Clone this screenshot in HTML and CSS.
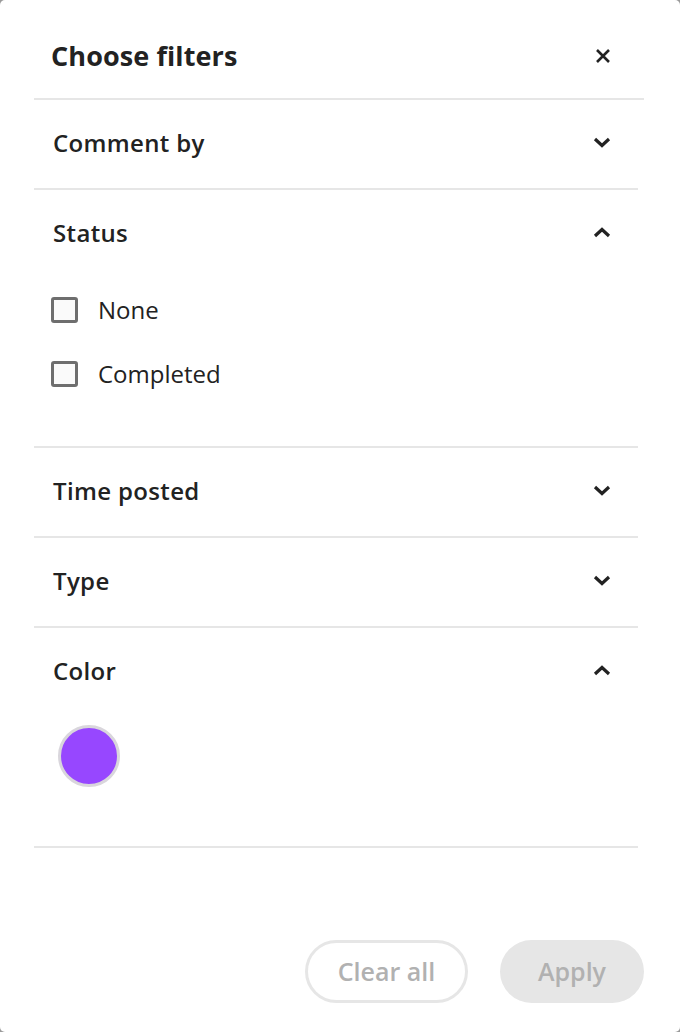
FILE: index.html
```html
<!DOCTYPE html>
<html>
<head>
<meta charset="utf-8">
<link rel="stylesheet" href="styles.css">
</head>
<body>
<div class="panel">
  <div class="header">
    <h1 class="title">Choose filters</h1>
    <button class="close" aria-label="Close">
      <svg width="16" height="16" viewBox="0 0 16 16"><path d="M2 2 L14 14 M14 2 L2 14" stroke="#222" stroke-width="2.6" stroke-linecap="butt" fill="none"/></svg>
    </button>
  </div>
  <div class="sections">
    <div class="section">
      <div class="section-head">
        <span class="label">Comment by</span>
        <svg class="chev" width="18" height="11" viewBox="0 0 18 11"><path d="M2 2 L9 8.5 L16 2" stroke="#222" stroke-width="3.2" fill="none"/></svg>
      </div>
    </div>
    <div class="section">
      <div class="section-head">
        <span class="label">Status</span>
        <svg class="chev" width="18" height="11" viewBox="0 0 18 11"><path d="M2 9 L9 2.5 L16 9" stroke="#222" stroke-width="3.2" fill="none"/></svg>
      </div>
      <div class="options">
        <label class="option"><span class="box"></span><span class="opt-text">None</span></label>
        <label class="option"><span class="box"></span><span class="opt-text">Completed</span></label>
      </div>
    </div>
    <div class="section">
      <div class="section-head">
        <span class="label">Time posted</span>
        <svg class="chev" width="18" height="11" viewBox="0 0 18 11"><path d="M2 2 L9 8.5 L16 2" stroke="#222" stroke-width="3.2" fill="none"/></svg>
      </div>
    </div>
    <div class="section">
      <div class="section-head">
        <span class="label">Type</span>
        <svg class="chev" width="18" height="11" viewBox="0 0 18 11"><path d="M2 2 L9 8.5 L16 2" stroke="#222" stroke-width="3.2" fill="none"/></svg>
      </div>
    </div>
    <div class="section">
      <div class="section-head">
        <span class="label">Color</span>
        <svg class="chev" width="18" height="11" viewBox="0 0 18 11"><path d="M2 9 L9 2.5 L16 9" stroke="#222" stroke-width="3.2" fill="none"/></svg>
      </div>
      <div class="colors">
        <span class="swatch"></span>
      </div>
    </div>
  </div>
  <div class="footer">
    <button class="btn btn-outline">Clear all</button>
    <button class="btn btn-fill">Apply</button>
  </div>
</div>
</body>
</html>
```
FILE: styles.css
```css
* { box-sizing: border-box; }
html, body { margin: 0; padding: 0; }
body {
  background: #9a9a9a;
  font-family: "Open Sans", "Noto Sans", sans-serif;
  color: #222;
}
.panel {
  width: 680px;
  height: 1032px;
  background: #fff;
  border-radius: 5px;
  padding: 0 36px 29px 34px;
  display: flex;
  flex-direction: column;
}
.header {
  height: 100px;
  border-bottom: 2px solid #e6e6e6;
  display: flex;
  align-items: center;
  justify-content: space-between;
  padding: 13px 33px 0 17px;
}
.title {
  margin: 0;
  font-size: 27px;
  font-weight: 700;
  letter-spacing: 0.1px;
  color: #222;
}
.close {
  border: 0;
  background: none;
  padding: 0;
  width: 16px;
  height: 16px;
  display: flex;
}
.sections { margin-right: 6px; }
.section { border-bottom: 2px solid #e6e6e6; }
.section-head {
  height: 88px;
  display: flex;
  align-items: center;
  justify-content: space-between;
  padding: 0 27px 3px 19px;
}
.label {
  font-size: 24px;
  font-weight: 600;
  letter-spacing: 0.35px;
}
.chev { display: block; }
.options {
  display: flex;
  flex-direction: column;
  gap: 38px;
  padding: 19px 0 59px 17px;
}
.option {
  display: flex;
  align-items: center;
  gap: 20px;
  height: 26px;
}
.box {
  width: 27px;
  height: 26px;
  border: 3px solid #6e6e6e;
  border-radius: 3px;
  background: #fafafa;
}
.opt-text {
  font-size: 24px;
  font-weight: 400;
  color: #222;
  padding-bottom: 2px;
}
.colors {
  padding: 9px 0 59px 24px;
}
.swatch {
  display: block;
  width: 62px;
  height: 62px;
  border-radius: 50%;
  background: #9747ff;
  border: 3px solid #d9d6dc;
}
.footer {
  margin-top: auto;
  display: flex;
  justify-content: flex-end;
  gap: 32px;
}
.btn {
  height: 63px;
  border-radius: 32px;
  font-family: "Open Sans", "Noto Sans", sans-serif;
  font-size: 25px;
  font-weight: 600;
  color: #b1b1b1;
  padding: 0 0 2px;
}
.btn-outline {
  width: 163px;
  background: #fff;
  border: 3px solid #e6e6e6;
}
.btn-fill {
  width: 144px;
  background: #e6e6e6;
  border: 0;
}
```
